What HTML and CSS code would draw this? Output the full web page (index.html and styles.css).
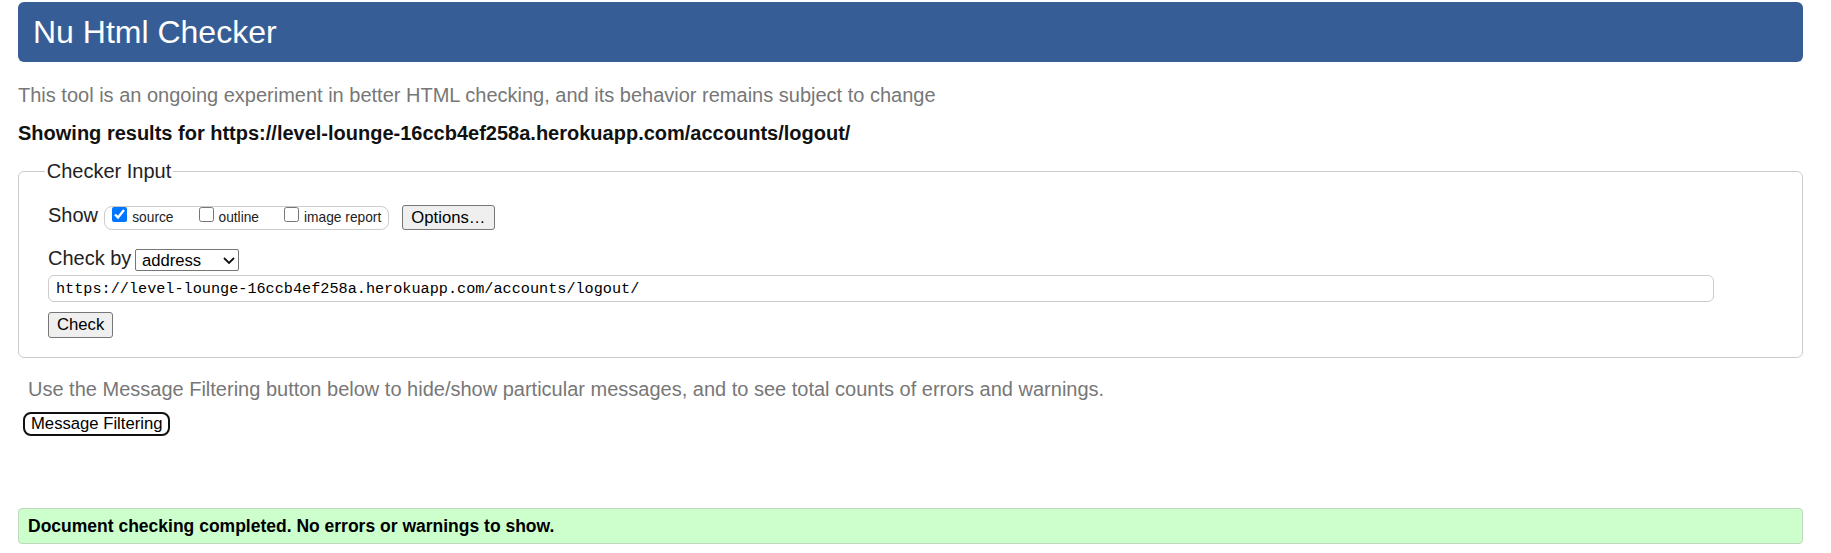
FILE: index.html
```html
<!DOCTYPE html>
<html lang="en">
<head>
<meta charset="utf-8">
<title>Showing results for https://level-lounge-16ccb4ef258a.herokuapp.com/accounts/logout/ - Nu Html Checker</title>
<link rel="stylesheet" href="styles.css">
</head>
<body>
<div class="page">
  <h1 class="title">Nu Html Checker</h1>
  <p class="intro">This tool is an ongoing experiment in better HTML checking, and its behavior remains subject to change</p>
  <p class="results">Showing results for https://level-lounge-16ccb4ef258a.herokuapp.com/accounts/logout/</p>
  <form>
    <fieldset class="checker">
      <legend class="legend">Checker Input</legend>
      <div class="row row-show">
        <span class="row-label">Show</span>
        <span class="showbox">
          <label class="opt"><input type="checkbox" class="cb" checked><span class="opt-text">source</span></label>
          <label class="opt"><input type="checkbox" class="cb"><span class="opt-text">outline</span></label>
          <label class="opt"><input type="checkbox" class="cb"><span class="opt-text">image report</span></label>
        </span>
        <button type="button" class="btn btn-options">Options…</button>
      </div>
      <div class="row row-by">
        <span class="row-label">Check by</span>
        <span class="select-wrap">
          <select class="select"><option>address</option></select>
          <svg class="chev" width="12" height="7" viewBox="0 0 12 7"><path d="M1 1 L6 6 L11 1" fill="none" stroke="#111" stroke-width="1.8"/></svg>
        </span>
      </div>
      <div class="row row-url">
        <input type="text" class="url" value="https://level-lounge-16ccb4ef258a.herokuapp.com/accounts/logout/">
      </div>
      <div class="row row-check">
        <button type="button" class="btn btn-check">Check</button>
      </div>
    </fieldset>
  </form>
  <p class="filter-note">Use the Message Filtering button below to hide/show particular messages, and to see total counts of errors and warnings.</p>
  <button type="button" class="btn-filter">Message Filtering</button>
  <div class="success">Document checking completed. No errors or warnings to show.</div>
</div>
</body>
</html>
```

FILE: styles.css
```css
html, body {
  margin: 0;
  padding: 0;
  background: #fff;
}

body {
  font-family: "Liberation Sans", Arial, sans-serif;
  font-size: 20px;
  color: #222;
}

.page {
  padding: 2px 28px 0 18px;
}

.title {
  margin: 0;
  padding: 11.5px 15px;
  font-size: 32px;
  font-weight: normal;
  line-height: normal;
  color: #fff;
  background: #365d95;
  border-radius: 6px;
}

.intro {
  margin: 21.5px 0 0 0;
  color: #777;
  line-height: normal;
}

.results {
  margin: 15.3px 0 0 0;
  font-weight: bold;
  color: #111;
  line-height: normal;
}

form {
  margin: 0;
}

.checker {
  margin: 15.3px 0 0 0;
  padding: 0 0 19px 29px;
  border: 1px solid #ccc;
  border-radius: 6px;
  min-width: 0;
}

.legend {
  padding: 0 2px;
  margin-left: -3.3px;
  line-height: normal;
}

.row {
  display: flex;
  align-items: center;
}

.row-show {
  margin-top: 22.4px;
  height: 25px;
}

.row-label {
  margin-bottom: 4px;
  line-height: normal;
}

.row-show .row-label {
  margin-right: 5.5px;
}

.showbox {
  display: flex;
  align-items: flex-start;
  box-sizing: border-box;
  height: 24px;
  padding: 0 7px 0 7.7px;
  border: 1px solid #ccc;
  border-radius: 8px;
}

.opt {
  display: flex;
  align-items: flex-start;
}

.opt + .opt {
  margin-left: 25px;
}

.cb {
  width: 15px;
  height: 15px;
  margin: 0 5px 0 0;
}

.opt-text {
  font-size: 13.75px;
  line-height: normal;
  margin-top: 3px;
}

.btn {
  font-family: "Liberation Sans", Arial, sans-serif;
  font-size: 16.67px;
  color: #000;
  background: #efefef;
  border: 1px solid #767676;
  border-radius: 3px;
  box-sizing: border-box;
  line-height: normal;
}

.btn-options {
  height: 25px;
  margin-left: 12.6px;
  padding: 0 8.5px;
}

.row-by {
  margin-top: 19px;
  height: 22px;
}

.row-by .row-label {
  margin-right: 4px;
}

.select-wrap {
  position: relative;
  display: inline-flex;
}

.select {
  appearance: none;
  -webkit-appearance: none;
  box-sizing: border-box;
  width: 104px;
  height: 22px;
  margin: 0;
  padding: 0 0 0 5.5px;
  font-family: "Liberation Sans", Arial, sans-serif;
  font-size: 16.67px;
  color: #000;
  background: #fff;
  border: 1px solid #767676;
  border-radius: 2px;
}

.chev {
  position: absolute;
  left: 87.5px;
  top: 8px;
  pointer-events: none;
}

.row-url {
  margin-top: 4px;
}

.url {
  box-sizing: border-box;
  width: 95%;
  height: 27px;
  margin: 0;
  padding: 0 7px;
  font-family: "Liberation Mono", "DejaVu Sans Mono", monospace;
  font-size: 15.2px;
  color: #000;
  border: 1px solid #ccc;
  border-radius: 6px;
  background: #fff;
}

.row-check {
  margin-top: 10px;
}

.btn-check {
  height: 26px;
  padding: 0 8px;
}

.filter-note {
  margin: 19.3px 0 0 10px;
  color: #777;
  line-height: normal;
}

.btn-filter {
  display: block;
  box-sizing: border-box;
  height: 24px;
  margin: 11px 0 0 5px;
  padding: 0 6px;
  font-family: "Liberation Sans", Arial, sans-serif;
  font-size: 16.67px;
  line-height: normal;
  color: #000;
  background: #fff;
  border: 2px solid #111;
  border-radius: 8px;
}

.success {
  margin-top: 71.8px;
  padding: 7px 9px;
  font-size: 17.5px;
  font-weight: bold;
  line-height: 20px;
  color: #000;
  background: #ccffcc;
  border: 1px solid #bfd6bf;
  border-radius: 4px;
}
```
